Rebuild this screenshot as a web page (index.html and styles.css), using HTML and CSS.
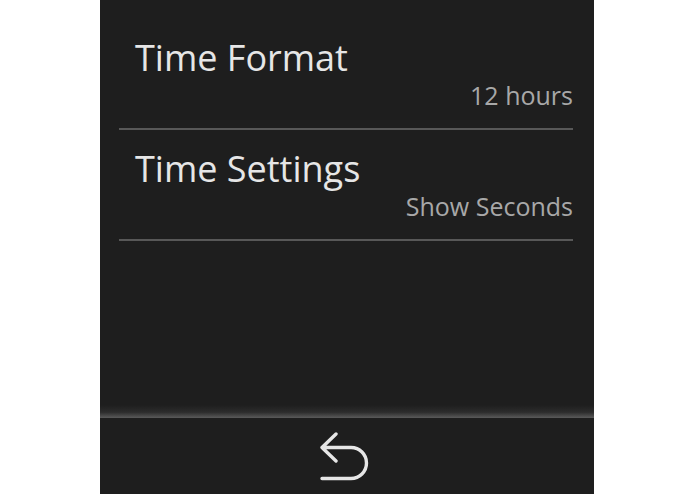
FILE: index.html
```html
<!DOCTYPE html>
<html>
<head>
<meta charset="utf-8">
<link rel="stylesheet" href="styles.css">
</head>
<body>
<div class="screen">
  <ul class="list">
    <li class="item">
      <div class="title">Time Format</div>
      <div class="value">12 hours</div>
    </li>
    <li class="item">
      <div class="title">Time Settings</div>
      <div class="value">Show Seconds</div>
    </li>
  </ul>
  <div class="bottom">
    <div class="glow"></div>
    <div class="bar">
      <svg class="back" width="52" height="50" viewBox="0 0 52 50">
        <path d="M16 2 L2 15.5 L16 29 M2 15.5 H31 A15.5 15.5 0 0 1 31 46.5 H2" fill="none" stroke="#e6e6e6" stroke-width="3.4" stroke-linecap="round" stroke-linejoin="round"/>
      </svg>
    </div>
  </div>
</div>
</body>
</html>
```
FILE: styles.css
```css
html, body {
  margin: 0;
  padding: 0;
  background: #ffffff;
}
.screen {
  width: 494px;
  height: 494px;
  margin-left: 100px;
  background: #1e1e1e;
  display: flex;
  flex-direction: column;
  font-family: "Open Sans", sans-serif;
}
.list {
  list-style: none;
  margin: 0;
  padding: 19px 21px 0 19px;
  flex: 1;
}
.item {
  height: 109px;
  border-bottom: 2px solid #585858;
  display: flex;
  flex-direction: column;
  box-sizing: content-box;
}
.title {
  color: #e6e6e6;
  font-size: 36px;
  line-height: 36px;
  margin-top: 21px;
  padding-left: 16px;
}
.value {
  color: #a8a8a8;
  font-size: 25px;
  line-height: 25px;
  margin-top: 7px;
  text-align: right;
}
.bottom {
  height: 89px;
  display: flex;
  flex-direction: column;
}
.glow {
  height: 13px;
  background: linear-gradient(#1e1e1e, #2c2c2c 55%, #5a5a5a);
}
.bar {
  flex: 1;
  display: flex;
  justify-content: center;
  align-items: flex-start;
  padding-top: 14px;
}
.back {
  display: block;
  margin-left: -2px;
}
```
